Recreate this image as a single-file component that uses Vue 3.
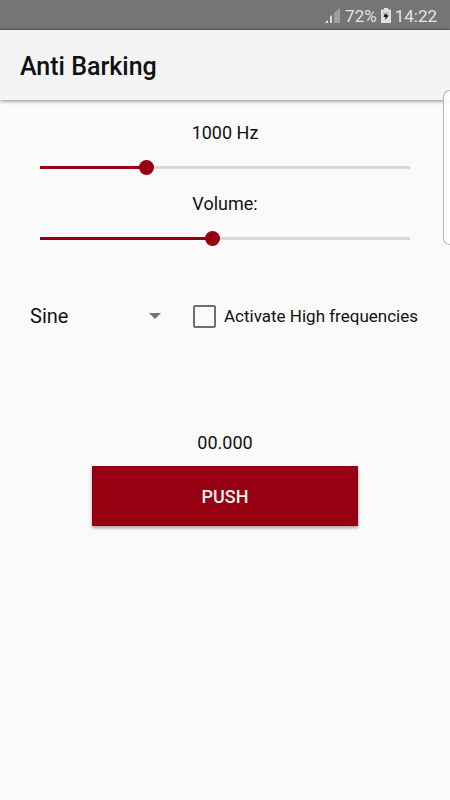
<template>
  <div class="app">
    <div class="status-bar">
      <svg class="signal" width="16" height="16" viewBox="0 0 16 16">
        <path d="M0 15l3-3v3z" fill="#e6e6e6"/>
        <path d="M5 8.500l2-1.500v8H5z" fill="#dcdcdc"/>
        <path d="M9 5l6-5v15H9z" fill="#a0a0a0"/>
      </svg>
      <span>72%</span>
      <svg class="battery" width="10" height="16" viewBox="0 0 10 16">
        <path d="M3 0h4v1.500h2.200q.8 0 .8.800v12q0 .8-.8.800H.8q-.8 0-.8-.8v-12q0-.8.8-.8H3z" fill="#e2e2e2"/>
        <path d="M2 4.500h6v1H2z" fill="#999"/>
        <path d="M3 6.500l3-.5.500 1.500H8L4 12l.500-3H2.500z" fill="#222"/>
      </svg>
      <span>14:22</span>
    </div>

    <header class="toolbar">
      <h1>Anti Barking</h1>
    </header>

    <main class="content">
      <label class="label" for="frequency">{{ frequency }} Hz</label>
      <input
        id="frequency"
        class="slider"
        type="range"
        min="0"
        max="3600"
        v-model.number="frequency"
        :style="{'--fill': fill(frequency, 3600)}"
      />

      <label class="label" for="volume">Volume:</label>
      <input
        id="volume"
        class="slider"
        type="range"
        min="0"
        max="1000"
        v-model.number="volume"
        :style="{'--fill': fill(volume, 1000)}"
      />

      <div class="options">
        <div class="spinner">
          <select v-model="wave" aria-label="Waveform">
            <option v-for="item in waves" :key="item">{{ item }}</option>
          </select>
          <span class="arrow"></span>
        </div>
        <label class="check">
          <input type="checkbox" v-model="highFrequencies"/>
          <span>Activate High frequencies</span>
        </label>
      </div>

      <p class="label timer">00.000</p>
      <button class="push" type="button">PUSH</button>
    </main>

    <div class="edge-handle"></div>
  </div>
</template>

<script setup>
import {ref} from 'vue'

const waves = ['Sine', 'Square', 'Triangle']

const frequency = ref(1000)
const volume = ref(465)
const wave = ref('Sine')
const highFrequencies = ref(false)

function fill(value, max) {
  return `${value / max * 100}%`
}
</script>

<style>
body {
  margin: 0;
  background: #fafafa;
}
</style>

<style scoped>
.app {
  position: relative;
  min-height: 100vh;
  color: #111;
  background: #fafafa;
  font-family: Roboto, sans-serif;
  font-size: 17px;
}

.status-bar {
  display: flex;
  align-items: center;
  justify-content: flex-end;
  gap: 4px;
  box-sizing: border-box;
  height: 30px;
  padding: 2px 13px 0 0;
  color: #e4e4e4;
  background: #757575;
  border-bottom: 1px solid #606060;
}

.toolbar {
  display: flex;
  align-items: center;
  box-sizing: border-box;
  height: 70px;
  padding: 4px 20px 0;
  background: #f4f4f4;
  box-shadow: 0 1px 4px rgba(0, 0, 0, 0.45);
}
.toolbar h1 {
  margin: 0;
  font-size: 25px;
  font-weight: 500;
  line-height: 30px;
}

.content {
  display: flex;
  flex-direction: column;
  padding-top: 21px;
}

.label {
  margin: 0;
  font-size: 18px;
  line-height: 24px;
  text-align: center;
}

.slider {
  appearance: none;
  height: 15px;
  margin: 15px 40px 17px;
  background: linear-gradient(#960010, #960010) left center / var(--fill) 3px no-repeat,
    linear-gradient(#d7d7d7, #d7d7d7) center / 100% 3px no-repeat;
}
.slider::-webkit-slider-thumb {
  appearance: none;
  width: 15px;
  height: 15px;
  border-radius: 50%;
  background: #960010;
}

.options {
  display: flex;
  align-items: center;
  height: 48px;
  margin-top: 29px;
  padding: 0 32px 0 30px;
}

.spinner {
  display: flex;
  align-items: center;
  flex: 1;
  margin-right: 32px;
}
.spinner select {
  appearance: none;
  flex: 1;
  min-width: 0;
  padding: 0;
  border: 0;
  color: #111;
  background: transparent;
  font: 20px/24px Roboto, sans-serif;
}
.arrow {
  border: 6px solid transparent;
  border-top-color: #757575;
  border-bottom: 0;
  pointer-events: none;
}

.check {
  display: flex;
  align-items: center;
  gap: 8px;
  line-height: 24px;
  white-space: nowrap;
}
.check input {
  appearance: none;
  width: 23px;
  height: 23px;
  margin: 0;
  border: 2px solid #6e6e6e;
  border-radius: 2px;
}
.check input:checked {
  background: #960010;
}

.timer {
  margin-top: 91px;
}
.push {
  align-self: center;
  width: 59%;
  height: 60px;
  margin-top: 11px;
  padding: 2px 0 0;
  border: 0;
  color: #f0f0f0;
  background: #960010;
  box-shadow: 0 2px 3px rgba(0, 0, 0, 0.35);
  font: 500 18px/24px Roboto, sans-serif;
}

/* system edge panel handle, lies over the page */
.edge-handle {
  position: absolute;
  top: 90px;
  right: 0;
  box-sizing: border-box;
  width: 7px;
  height: 155px;
  border: 1px solid #b4b4b4;
  border-right: 0;
  border-radius: 7px 0 0 7px;
  background: rgba(255, 255, 255, 0.85);
}
</style>
